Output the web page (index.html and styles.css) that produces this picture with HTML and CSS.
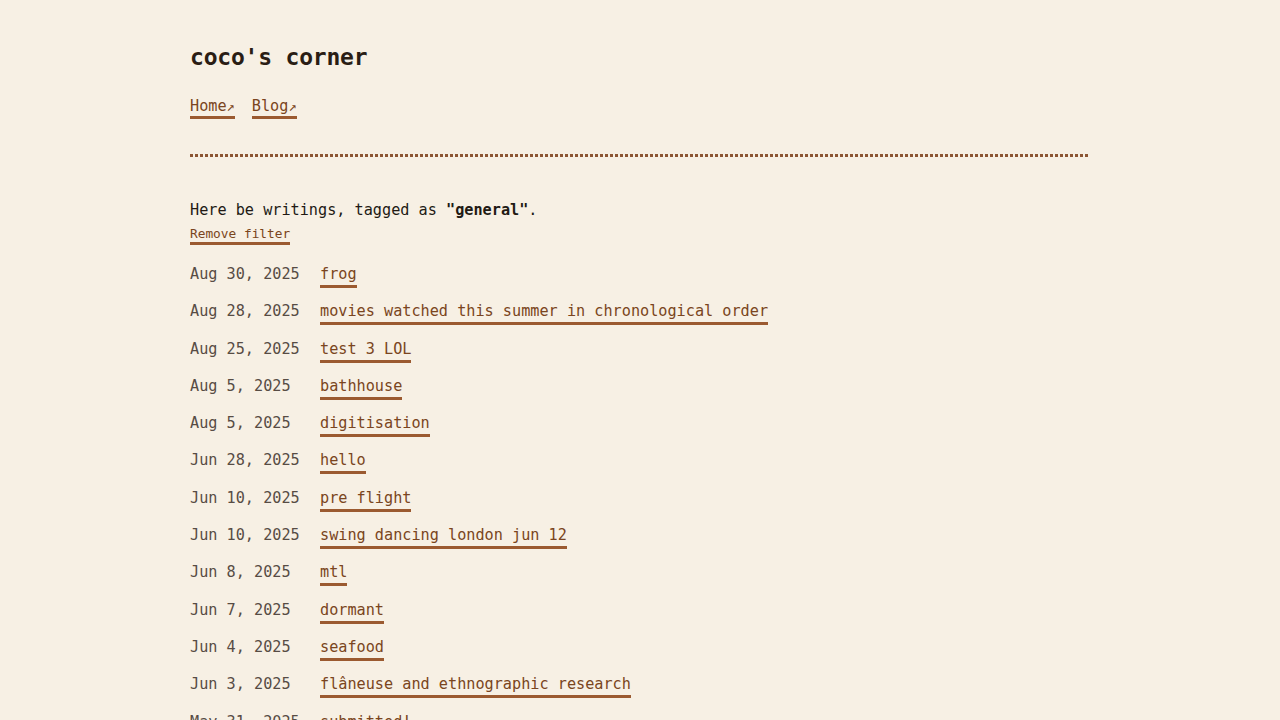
FILE: index.html
```html
<!DOCTYPE html>
<html lang="en">
<head>
<meta charset="utf-8">
<title>coco's corner</title>
<link rel="stylesheet" href="styles.css">
</head>
<body>
<div class="page">
  <header class="site-header">
    <h1 class="site-title">coco's corner</h1>
    <nav class="nav">
      <a class="link nav-link" href="#">Home<span class="arrow">↗</span></a>
      <a class="link nav-link" href="#">Blog<span class="arrow">↗</span></a>
    </nav>
  </header>
  <hr class="divider">
  <main class="content">
    <p class="intro">Here be writings, tagged as <strong>"general"</strong>.</p>
    <a class="link remove" href="#">Remove filter</a>
    <ul class="posts">
      <li class="post"><span class="date">Aug 30, 2025</span><a class="link" href="#">frog</a></li>
      <li class="post"><span class="date">Aug 28, 2025</span><a class="link" href="#">movies watched this summer in chronological order</a></li>
      <li class="post"><span class="date">Aug 25, 2025</span><a class="link" href="#">test 3 LOL</a></li>
      <li class="post"><span class="date">Aug 5, 2025</span><a class="link" href="#">bathhouse</a></li>
      <li class="post"><span class="date">Aug 5, 2025</span><a class="link" href="#">digitisation</a></li>
      <li class="post"><span class="date">Jun 28, 2025</span><a class="link" href="#">hello</a></li>
      <li class="post"><span class="date">Jun 10, 2025</span><a class="link" href="#">pre flight</a></li>
      <li class="post"><span class="date">Jun 10, 2025</span><a class="link" href="#">swing dancing london jun 12</a></li>
      <li class="post"><span class="date">Jun 8, 2025</span><a class="link" href="#">mtl</a></li>
      <li class="post"><span class="date">Jun 7, 2025</span><a class="link" href="#">dormant</a></li>
      <li class="post"><span class="date">Jun 4, 2025</span><a class="link" href="#">seafood</a></li>
      <li class="post"><span class="date">Jun 3, 2025</span><a class="link" href="#">flâneuse and ethnographic research</a></li>
      <li class="post"><span class="date">May 31, 2025</span><a class="link" href="#">submitted!</a></li>
      <li class="post"><span class="date">May 20, 2025</span><a class="link" href="#">notes</a></li>
    </ul>
  </main>
</div>
</body>
</html>
```
FILE: styles.css
```css
html, body {
  margin: 0;
  padding: 0;
  background: #f7f0e4;
}
body {
  font-family: "DejaVu Sans Mono", "Liberation Mono", monospace;
  font-size: 15.2px;
  color: #221a14;
}
.page {
  width: 900px;
  margin: 0 auto;
  padding-top: 42px;
}
.site-title {
  margin: 0;
  font-size: 23px;
  font-weight: bold;
  line-height: 30px;
  color: #2a1d14;
  letter-spacing: -0.2px;
}
.nav {
  display: flex;
  gap: 17px;
  margin-top: 25px;
  line-height: 22px;
}
.link {
  color: #7a4520;
  text-decoration: none;
  border-bottom: 3px solid #9b5a30;
  padding-bottom: 1px;
}
.nav-link {
  display: inline-block;
  line-height: 19px;
  padding-bottom: 0;
}
.arrow {
  font-size: 0.9em;
}
.divider {
  margin: 35px 0 0;
  border: 0;
  height: 3px;
  background-image: linear-gradient(to right, #8c5533 3px, transparent 3px);
  background-size: 5px 3px;
  background-repeat: repeat-x;
}
.content {
  padding-top: 42px;
}
.intro {
  margin: 0;
  line-height: 22px;
}
.intro strong {
  font-weight: bold;
}
.remove {
  display: inline-block;
  font-size: 12.8px;
  line-height: 16px;
  margin-top: 5px;
  padding-bottom: 0;
}
.posts {
  list-style: none;
  margin: 18px 0 0;
  padding: 0;
  display: flex;
  flex-direction: column;
  gap: 12.3px;
}
.post {
  display: grid;
  grid-template-columns: 130px auto;
  justify-content: start;
  line-height: 22px;
}
.post .link {
  padding-bottom: 0;
}
.date {
  color: #574c44;
}
```
